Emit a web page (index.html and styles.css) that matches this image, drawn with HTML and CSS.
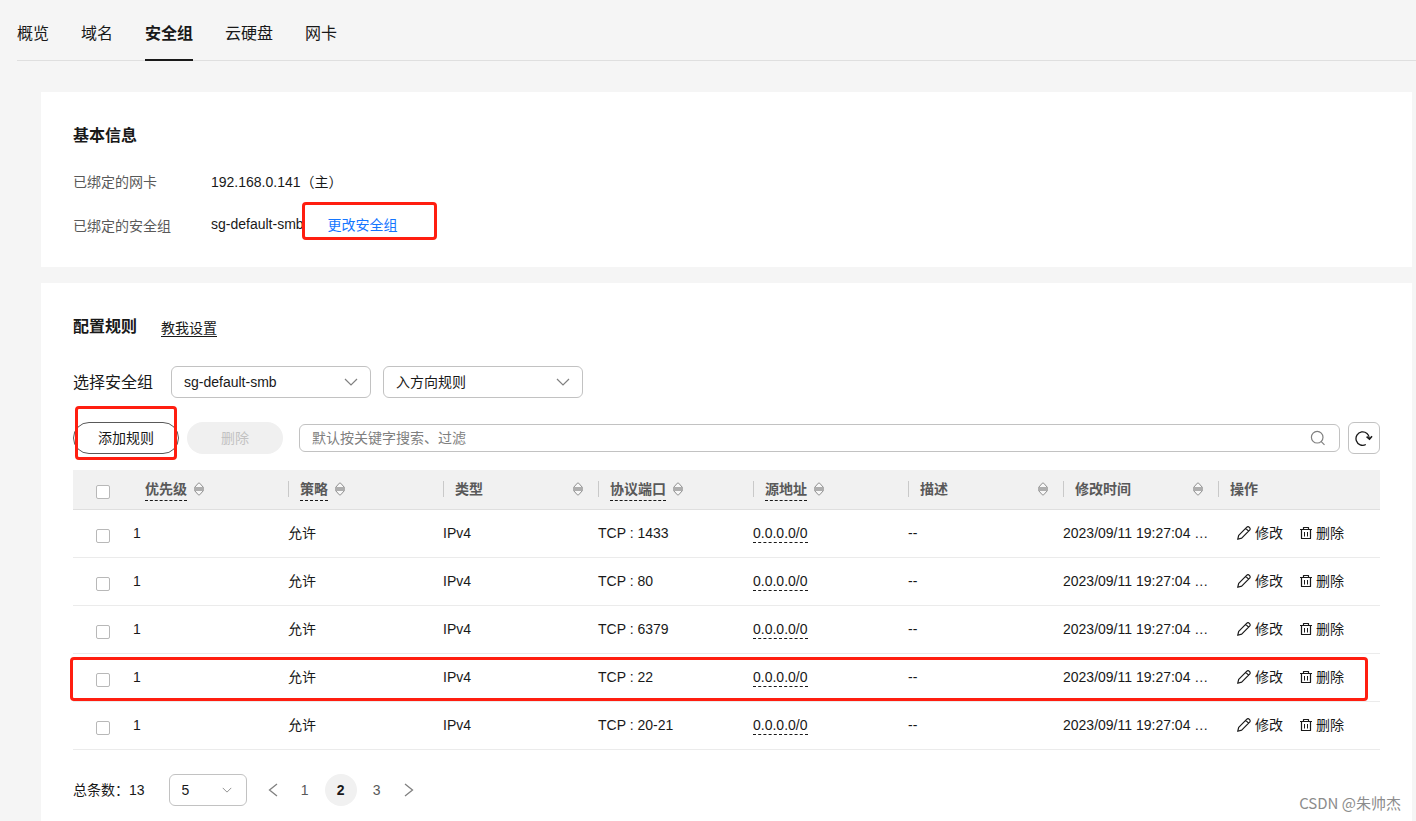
FILE: index.html
```html
<!DOCTYPE html>
<html lang="zh-CN">
<head>
<meta charset="utf-8">
<title>安全组</title>
<link rel="stylesheet" href="styles.css">
</head>
<body>
<svg class="sprite" aria-hidden="true">
  <symbol id="sort" viewBox="0 0 10 14"><path d="M.5 5.500 4.300 1.200Q5 .4 5.700 1.200L9.500 5.500zM.5 8.500 4.300 12.800Q5 13.600 5.700 12.800L9.500 8.500z" fill="#f7f7f7" stroke="#8e8e8e" stroke-linejoin="round"/><path d="M0 5h10v4H0z" fill="#aeaeae"/></symbol>
  <symbol id="chevron" viewBox="0 0 14 8"><path d="M1 1l6 6 6-6" fill="none" stroke="currentColor" stroke-width="1.200"/></symbol>
  <symbol id="pencil" viewBox="0 0 14 14"><path d="M.7 13.300 1.700 9.300 9.600 1.400Q11 0 12.400 1.400T12.600 4.200L4.700 12.100zM8.700 2.300l2.900 2.900" fill="none" stroke="currentColor" stroke-width="1.200" stroke-linejoin="round"/></symbol>
  <symbol id="trash" viewBox="0 0 12 14"><path d="M0 3.500h12M3.500 3.500v-2h5v2M1.500 3.500v9h9v-9" fill="none" stroke="currentColor" stroke-width="1.200" stroke-linejoin="round"/><path d="M4.500 6v4.500M7.500 6v4.500" stroke="currentColor"/></symbol>
</svg>
<nav class="tabs">
  <a class="tab" href="#">概览</a>
  <a class="tab" href="#">域名</a>
  <a class="tab tab-active" href="#">安全组</a>
  <a class="tab" href="#">云硬盘</a>
  <a class="tab" href="#">网卡</a>
</nav>
<main class="content">
  <section class="card">
    <h2 class="title">基本信息</h2>
    <dl class="info">
      <dt>已绑定的网卡</dt>
      <dd>192.168.0.141（主）</dd>
      <dt>已绑定的安全组</dt>
      <dd class="group">sg-default-smb<span class="change"><a class="link" href="#">更改安全组</a><i class="mark mark-link"></i></span></dd>
    </dl>
  </section>
  <section class="card card-rules">
    <div class="heading">
      <h2 class="title">配置规则</h2>
      <a class="guide" href="#">教我设置</a>
    </div>
    <div class="filters">
      <label class="filter-label" for="group">选择安全组</label>
      <span class="select"><select id="group"><option>sg-default-smb</option></select><svg class="arrow"><use href="#chevron"/></svg></span>
      <span class="select"><select aria-label="方向"><option>入方向规则</option></select><svg class="arrow"><use href="#chevron"/></svg></span>
    </div>
    <div class="toolbar">
      <span class="add"><button class="btn btn-add" type="button">添加规则</button><i class="mark mark-add"></i></span>
      <button class="btn btn-delete" type="button" disabled>删除</button>
      <span class="search">
        <input type="text" aria-label="搜索" placeholder="默认按关键字搜索、过滤">
        <svg class="search-icon" viewBox="0 0 16 16"><path d="M11.500 11.800 14.500 14.800M13 7.200a5.800 5.800 0 1 1-11.600 0 5.800 5.800 0 0 1 11.600 0z" fill="none" stroke="currentColor" stroke-width="1.200"/></svg>
      </span>
      <button class="refresh" type="button" aria-label="刷新"><svg viewBox="0 0 18 18"><path d="M10.800 15.500A6.700 6.700 0 1 1 14.400 9.500" fill="none" stroke="currentColor" stroke-width="1.300"/><path d="M11.600 7.600l2.900 2.600 2.500-2.900" fill="none" stroke="currentColor" stroke-width="1.600"/></svg></button>
    </div>
    <table class="rules">
      <colgroup><col class="c-check"><col class="c"><col class="c"><col class="c"><col class="c"><col class="c"><col class="c"><col class="c"><col class="c-ops"></colgroup>
      <thead>
        <tr>
          <th class="check"><input type="checkbox" aria-label="全选"></th>
          <th><div class="head head-first"><span class="tip">优先级</span><svg class="sort"><use href="#sort"/></svg></div></th>
          <th><div class="head"><span class="tip">策略</span><svg class="sort"><use href="#sort"/></svg></div></th>
          <th><div class="head head-wide"><span>类型</span><svg class="sort"><use href="#sort"/></svg></div></th>
          <th><div class="head"><span class="tip">协议端口</span><svg class="sort"><use href="#sort"/></svg></div></th>
          <th><div class="head"><span class="tip">源地址</span><svg class="sort"><use href="#sort"/></svg></div></th>
          <th><div class="head head-wide"><span>描述</span><svg class="sort"><use href="#sort"/></svg></div></th>
          <th><div class="head head-wide"><span>修改时间</span><svg class="sort"><use href="#sort"/></svg></div></th>
          <th><div class="head"><span>操作</span></div></th>
        </tr>
      </thead>
      <tbody>
        <tr>
          <td class="check"><input type="checkbox" aria-label="选择规则"></td><td>1</td><td>允许</td><td>IPv4</td><td>TCP : 1433</td><td><span class="address">0.0.0.0/0</span></td><td>--</td><td class="time">2023/09/11 19:27:04 …</td>
          <td><div class="ops"><button type="button"><svg class="pencil"><use href="#pencil"/></svg>修改</button><button type="button"><svg class="trash"><use href="#trash"/></svg>删除</button></div></td>
        </tr>
        <tr>
          <td class="check"><input type="checkbox" aria-label="选择规则"></td><td>1</td><td>允许</td><td>IPv4</td><td>TCP : 80</td><td><span class="address">0.0.0.0/0</span></td><td>--</td><td class="time">2023/09/11 19:27:04 …</td>
          <td><div class="ops"><button type="button"><svg class="pencil"><use href="#pencil"/></svg>修改</button><button type="button"><svg class="trash"><use href="#trash"/></svg>删除</button></div></td>
        </tr>
        <tr>
          <td class="check"><input type="checkbox" aria-label="选择规则"></td><td>1</td><td>允许</td><td>IPv4</td><td>TCP : 6379</td><td><span class="address">0.0.0.0/0</span></td><td>--</td><td class="time">2023/09/11 19:27:04 …</td>
          <td><div class="ops"><button type="button"><svg class="pencil"><use href="#pencil"/></svg>修改</button><button type="button"><svg class="trash"><use href="#trash"/></svg>删除</button></div></td>
        </tr>
        <tr class="marked">
          <td class="check"><input type="checkbox" aria-label="选择规则"><i class="mark mark-row"></i></td><td>1</td><td>允许</td><td>IPv4</td><td>TCP : 22</td><td><span class="address">0.0.0.0/0</span></td><td>--</td><td class="time">2023/09/11 19:27:04 …</td>
          <td><div class="ops"><button type="button"><svg class="pencil"><use href="#pencil"/></svg>修改</button><button type="button"><svg class="trash"><use href="#trash"/></svg>删除</button></div></td>
        </tr>
        <tr>
          <td class="check"><input type="checkbox" aria-label="选择规则"></td><td>1</td><td>允许</td><td>IPv4</td><td>TCP : 20-21</td><td><span class="address">0.0.0.0/0</span></td><td>--</td><td class="time">2023/09/11 19:27:04 …</td>
          <td><div class="ops"><button type="button"><svg class="pencil"><use href="#pencil"/></svg>修改</button><button type="button"><svg class="trash"><use href="#trash"/></svg>删除</button></div></td>
        </tr>
      </tbody>
    </table>
    <div class="pager">
      <label class="total" for="size">总条数：13</label>
      <span class="select select-small"><select id="size"><option>5</option></select><svg class="arrow" viewBox="0 0 14 8"><use href="#chevron" width="14" height="8"/></svg></span>
      <button class="step step-prev" type="button" aria-label="上一页"><svg viewBox="0 0 10 14"><path d="M9 1 1.500 7 9 13" fill="none" stroke="currentColor" stroke-width="1.300"/></svg></button>
      <button class="page" type="button">1</button>
      <button class="page page-current" type="button">2</button>
      <button class="page" type="button">3</button>
      <button class="step" type="button" aria-label="下一页"><svg viewBox="0 0 10 14"><path d="M1 1 8.500 7 1 13" fill="none" stroke="currentColor" stroke-width="1.300"/></svg></button>
    </div>
  </section>
</main>
<span class="watermark">CSDN @朱帅杰</span>
</body>
</html>
```

FILE: styles.css
```css
* { box-sizing: border-box; }

body {
  position: relative;
  display: flex;
  flex-direction: column;
  min-height: 100vh;
  margin: 0;
  background: #f5f5f5;
  color: #191919;
  font: 14px/20px "Liberation Sans", "Noto Sans CJK SC", sans-serif;
}

button, select, input { font: inherit; color: inherit; }
button { padding: 0; border: 0; background: none; white-space: nowrap; }
a { color: inherit; text-decoration: none; }
.sprite { position: absolute; width: 0; height: 0; }

.tabs {
  display: flex;
  gap: 32px;
  height: 61px;
  margin-left: 17px;
  border-bottom: 1px solid #dfdfdf;
}
.tab { height: 61px; padding-top: 22px; font-size: 16px; line-height: 24px; white-space: nowrap; }
.tab-active { border-bottom: 2px solid #191919; font-weight: 700; }

.content {
  display: flex;
  flex: 1;
  flex-direction: column;
  gap: 16px;
  padding: 31px 4px 0 41px;
}
.card { padding: 32px 32px 31px; background: #fff; }
.card-rules { flex: 1; padding-bottom: 15px; }
.title { margin: 0; font-size: 16px; line-height: 24px; }

.info {
  display: grid;
  grid-template-columns: 138px 1fr;
  row-gap: 24px;
  margin: 24px 0 0;
}
.info dt { color: #595959; }
.info dd { margin: 0; }
.info .group { display: flex; align-items: flex-start; line-height: 16px; white-space: nowrap; }
.change { position: relative; margin-left: 24px; line-height: 18px; }
.link { color: #1476ff; }

.mark {
  position: absolute;
  border: 3px solid #ff1e10;
  border-radius: 4px;
  pointer-events: none;
}
.mark-link { inset: -14px -39px -6px -26px; }
.mark-add { inset: -16px 2px -6px 2px; }
.mark-row { inset: 3px 12px 1px -3px; }

.heading { display: flex; align-items: center; gap: 24px; }
.guide { margin-top: 2px; border-bottom: 1px solid #191919; line-height: 16px; }

.filters { display: flex; align-items: center; gap: 12px; margin-top: 27px; }
.filter-label { margin-right: 6px; padding-top: 2px; font-size: 16px; }
.select { position: relative; display: inline-flex; width: 200px; height: 32px; }
.select select {
  width: 100%;
  padding: 0 36px 0 12px;
  border: 1px solid #c2c2c2;
  border-radius: 6px;
  background: #fff;
  appearance: none;
}
.arrow {
  position: absolute;
  top: 12px;
  right: 13px;
  width: 14px;
  height: 8px;
  color: #808080;
  pointer-events: none;
}

.toolbar { display: flex; align-items: center; gap: 8px; margin-top: 24px; }
.add { position: relative; display: flex; }
.btn { width: 96px; height: 32px; border-radius: 16px; }
.btn-add { width: 106px; border: 1px solid #595959; }
.btn-delete { background: #f0f0f0; color: #c2c2c2; }
.search { position: relative; flex: 1; margin-left: 8px; height: 28px; }
.search input {
  display: block;
  width: 100%;
  height: 28px;
  padding: 0 40px 0 12px;
  border: 1px solid #c2c2c2;
  border-radius: 6px;
}
.search input::placeholder { color: #808080; opacity: 1; }
.search-icon { position: absolute; top: 6px; right: 14px; width: 16px; height: 16px; color: #808080; }
.refresh {
  display: grid;
  place-items: center;
  width: 32px;
  height: 32px;
  border: 1px solid #c2c2c2;
  border-radius: 6px;
}
.refresh svg { width: 18px; height: 18px; }

.rules { width: 100%; margin-top: 16px; border-collapse: separate; border-spacing: 0; table-layout: fixed; }
.c-check { width: 60px; }
.c { width: 155px; }
.c-ops { width: 162px; }
.rules th { height: 40px; padding: 0 0 1px; background: #f1f1f1; border-bottom: 1px solid #dfdfdf; color: #595959; text-align: left; }
.rules td { height: 48px; padding: 0 0 2px; border-bottom: 1px solid #ebebeb; white-space: nowrap; }
.rules .check { padding: 4px 0 0 23px; }
.check input {
  display: block;
  width: 14px;
  height: 14px;
  margin: 0;
  border: 1px solid #b8b8b8;
  border-radius: 2px;
  background: #fff;
  appearance: none;
}
.head { display: flex; align-items: center; gap: 7px; height: 16px; padding-left: 11px; border-left: 1px solid #c9c9c9; }
.head-first { border-left-color: transparent; }
.head-wide { justify-content: space-between; padding-right: 15px; }
.tip { height: 22px; margin-top: 2px; border-bottom: 1px dashed #191919; }
.sort { width: 10px; height: 14px; }
.address { display: inline-block; border-bottom: 1px dashed #191919; line-height: 17px; }
.time { overflow: hidden; text-overflow: ellipsis; }
.ops { display: flex; gap: 17px; padding-left: 19px; }
.ops button { display: flex; align-items: center; gap: 4px; }
.pencil { width: 14px; height: 14px; }
.trash { width: 12px; height: 14px; }
.marked { position: relative; }

.pager { display: flex; align-items: center; gap: 4px; margin-top: 24px; }
.total { margin-right: 20px; }
.select-small { width: 78px; }
.select-small .arrow { width: 10px; right: 15px; }
.step { display: grid; place-items: center; width: 24px; height: 32px; color: #808080; }
.step-prev { margin-left: 10px; }
.step svg { width: 10px; height: 14px; }
.page { width: 32px; height: 32px; border-radius: 16px; color: #595959; }
.page-current { background: #f1f1f1; color: #191919; font-weight: 700; }

.watermark {
  position: absolute;
  right: 15px;
  bottom: 8px;
  color: #8c8c8c;
  font-family: "Noto Sans CJK SC", sans-serif;
  font-size: 15px;
}
```
